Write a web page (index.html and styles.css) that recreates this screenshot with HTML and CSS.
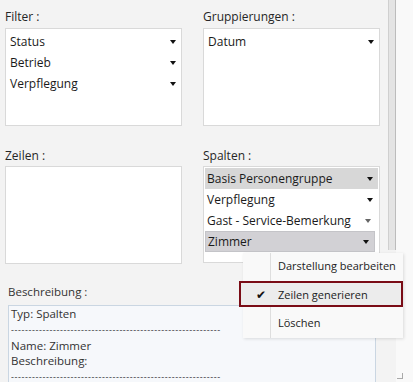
FILE: index.html
```html
<!DOCTYPE html>
<html lang="de">
<head>
    <meta charset="UTF-8">
    <title>Pivot Layout</title>
    <link rel="stylesheet" href="styles.css">
</head>
<body>

<div class="window">
    <div class="content">
        <div class="fields">
            <div class="field">
                <div class="label">Filter :</div>
                <div class="box">
                    <div class="item"><span>Status</span><i class="arrow"></i></div>
                    <div class="item"><span>Betrieb</span><i class="arrow"></i></div>
                    <div class="item"><span>Verpflegung</span><i class="arrow"></i></div>
                </div>
            </div>
            <div class="field">
                <div class="label">Gruppierungen :</div>
                <div class="box">
                    <div class="item"><span>Datum</span><i class="arrow"></i></div>
                </div>
            </div>
            <div class="field second">
                <div class="label">Zeilen :</div>
                <div class="box"></div>
            </div>
            <div class="field second">
                <div class="label">Spalten :</div>
                <div class="box tight">
                    <div class="item selected"><span>Basis Personengruppe</span><i class="arrow"></i></div>
                    <div class="item"><span>Verpflegung</span><i class="arrow"></i></div>
                    <div class="item short"><span>Gast - Service-Bemerkung</span><i class="arrow"></i></div>
                    <div class="item selected active"><span>Zimmer</span><i class="arrow"></i></div>
                </div>
            </div>
        </div>

        <div class="description">
            <div class="label">Beschreibung :</div>
            <div class="desc-box">
                <div>Typ: Spalten</div>
                <div class="dashes">------------------------------------------------------------</div>
                <div>Name: Zimmer</div>
                <div>Beschreibung:</div>
                <div class="dashes">------------------------------------------------------------</div>
            </div>
        </div>
    </div>

    <div class="splitter"></div>
    <div class="side"><span class="grip"></span></div>

    <div class="menu">
        <div class="menu-item"><span class="check"></span><span>Darstellung bearbeiten</span></div>
        <div class="menu-item marked"><span class="check">&#10004;</span><span>Zeilen generieren</span></div>
        <div class="menu-item last"><span class="check"></span><span>Löschen</span></div>
    </div>
</div>

</body>
</html>
```

FILE: styles.css
```css
body {
    margin: 0;
    font-family: "Open Sans", "Noto Sans", sans-serif;
    font-size: 12px;
    color: #1a1a1a;
    background-color: #f3f3f3;
}
.window {
    position: relative;
    width: 413px;
    height: 382px;
    overflow: hidden;
    display: flex;
}
.content {
    width: 388px;
}
.fields {
    display: grid;
    grid-template-columns: 177px 177px;
    column-gap: 21px;
    padding: 8px 0 0 5px;
}
.label {
    line-height: 18px;
    margin-bottom: 2px;
    color: #262626;
}
.field.second {
    margin-top: 21px;
}
.field.second .label {
    margin-bottom: 1px;
}
.box {
    box-sizing: border-box;
    height: 98px;
    background: #ffffff;
    border: 1px solid #d9d9d9;
    padding-top: 2px;
}
.box.tight {
    padding: 1px 1px 0 1px;
    height: 97px;
}
.item {
    display: flex;
    align-items: center;
    justify-content: space-between;
    height: 21px;
    padding: 0 5px 0 4px;
}
.tight .item {
    padding: 0 5px 0 2px;
}
.item.selected {
    background: #d7d7d7;
}
.item.active {
    background: #d2d1d5;
    border: 1px solid #c4c4c8;
    height: 19px;
    margin-right: 3px;
}
.item.short {
    margin-right: 4px;
    padding-right: 3px;
}
.arrow {
    width: 0;
    height: 0;
    border-left: 3px solid transparent;
    border-right: 3px solid transparent;
    border-top: 4px solid #111111;
}
.short .arrow {
    border-top-color: #666666;
}
.description {
    margin-top: 20px;
    padding-left: 8px;
    font-size: 11.5px;
    color: #333333;
}
.description .label {
    line-height: 16px;
    margin-bottom: 5px;
    color: #333333;
}
.desc-box {
    box-sizing: border-box;
    width: 368px;
    height: 86px;
    background: #f6f8fb;
    border: 1px solid #cad6e2;
    padding: 0 0 0 2px;
    line-height: 15px;
}
.dashes {
    font-size: 9px;
    line-height: 17px;
    letter-spacing: 0.6px;
    color: #333333;
    width: 218px;
    overflow: hidden;
    white-space: nowrap;
}
.splitter {
    width: 8px;
    box-sizing: border-box;
    height: 250px;
    background: #e4e4e4;
    border-left: 1px solid #cfcfcf;
    border-right: 1px solid #bcbcbc;
}
.side {
    flex: 1;
    position: relative;
    background: #f9f9f9;
}
.grip {
    position: absolute;
    right: 10px;
    bottom: 3px;
    width: 5px;
    height: 5px;
    border-right: 1px solid #a9a9a9;
    border-bottom: 1px solid #a9a9a9;
}
.menu {
    position: absolute;
    left: 243px;
    top: 253px;
    width: 160px;
    padding: 1px 0 4px;
    background: #f9f9f9;
    box-shadow: 1px 1px 3px rgba(0, 0, 0, 0.12);
    background-image: linear-gradient(to right, transparent 27px, #dedede 27px, #dedede 28px, transparent 28px);
}
.menu-item {
    display: flex;
    align-items: center;
    height: 23px;
    font-size: 11px;
    white-space: nowrap;
    color: #222222;
}
.menu-item .check {
    flex: none;
    width: 35px;
    text-align: center;
    font-size: 12px;
    color: #111111;
}
.menu-item.marked {
    margin: 4px 0 0 -4px;
    height: 22px;
    background: #ececec;
    border: 2px solid #7a0c16;
    padding-left: 2px;
}
.menu-item.last {
    margin-top: 3px;
    height: 24px;
}
```
